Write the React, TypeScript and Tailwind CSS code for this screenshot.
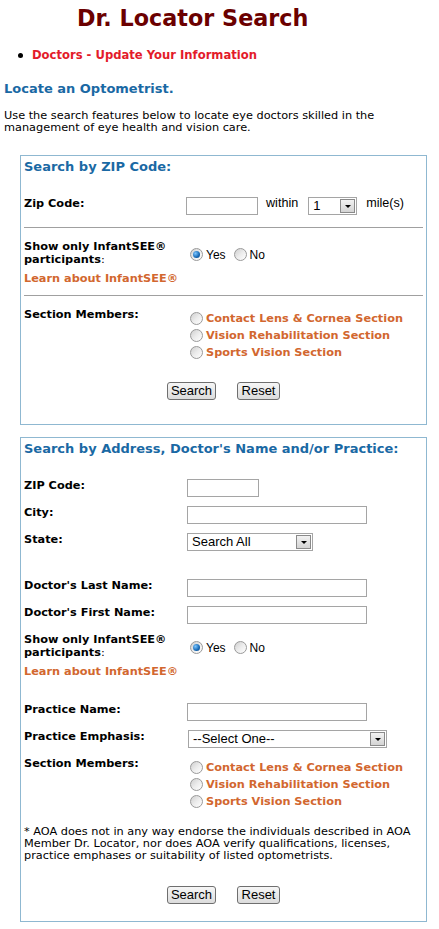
import React from 'react';

const Radio: React.FC<{ checked?: boolean }> = ({ checked }) => (
  <span className="flex h-[13px] w-[13px] shrink-0 items-center justify-center rounded-full border border-[#9a9a9a] bg-linear-to-br from-[#cfcfcf] via-[#ececec] to-white">
    {checked && (
      <span className="h-[7px] w-[7px] rounded-full bg-[radial-gradient(circle_at_35%_35%,#7cc6ff,#1668b4_60%,#0a3f75)]" />
    )}
  </span>
);

const TextBox: React.FC<{ w: string }> = ({ w }) => (
  <div className={`h-[18px] border border-[#a5a5a5] bg-white ${w}`} />
);

const Select: React.FC<{ w: string; value: string }> = ({ w, value }) => (
  <div className={`flex h-[18px] items-center justify-between border border-[#a5a5a5] bg-white pl-[4px] pr-px ${w}`}>
    <span className="font-['Liberation_Sans',Arial,sans-serif] text-[13px] leading-[16px] text-black">{value}</span>
    <span className="flex h-[14px] w-[15px] items-center justify-center border border-[#8a8a8a] bg-linear-to-b from-[#f2f2f2] to-[#d4d4d4]">
      <span className="h-0 w-0 border-x-[3px] border-t-[3px] border-x-transparent border-t-black" />
    </span>
  </div>
);

const Btn: React.FC<{ label: string; w: string }> = ({ label, w }) => (
  <button className={`flex h-[18px] items-center justify-center rounded-[3px] border border-[#6f6f6f] bg-linear-to-b from-[#f6f6f6] to-[#dcdcdc] font-['Liberation_Sans',Arial,sans-serif] text-[13px] leading-[16px] text-black ${w}`}>
    {label}
  </button>
);

const Label: React.FC<{ children: React.ReactNode }> = ({ children }) => (
  <div className="w-[162px] shrink-0 text-[11.3px] font-bold leading-[13px] text-black">{children}</div>
);

const Row: React.FC<{ label: React.ReactNode; mt: string; children: React.ReactNode }> = ({ label, mt, children }) => (
  <div className={`flex items-start ${mt}`}>
    <Label>{label}</Label>
    {children}
  </div>
);

const InfantRow: React.FC<{ mt: string }> = ({ mt }) => (
  <>
    <div className={`flex items-center ${mt}`}>
      <Label>
        Show only InfantSEE®
        <br />
        participants<span className="font-normal">:</span>
      </Label>
      <div className="ml-[4px] flex items-center pt-[3px] font-['Liberation_Sans',Arial,sans-serif] text-[12px] text-black">
        <Radio checked />
        <span className="ml-[3px]">Yes</span>
        <span className="ml-[8px]">
          <Radio />
        </span>
        <span className="ml-[3px]">No</span>
      </div>
    </div>
    <div className="mt-[6px] text-[11.3px] font-bold leading-[13px] text-[#d2672f]">Learn about InfantSEE®</div>
  </>
);

const Sections: React.FC<{ mt: string }> = ({ mt }) => (
  <div className={`flex items-start ${mt}`}>
    <Label>Section Members:</Label>
    <div className="ml-[4px] mt-[2px] flex flex-col">
      {['Contact Lens & Cornea Section', 'Vision Rehabilitation Section', 'Sports Vision Section'].map((s) => (
        <div key={s} className="flex h-[17px] items-center">
          <Radio />
          <span className="ml-[3px] text-[11.3px] font-bold leading-[13px] text-[#d2672f]">{s}</span>
        </div>
      ))}
    </div>
  </div>
);

const Buttons: React.FC<{ mt: string }> = ({ mt }) => (
  <div className={`flex justify-center gap-[21px] ${mt}`}>
    <Btn label="Search" w="w-[49px]" />
    <Btn label="Reset" w="w-[43px]" />
  </div>
);

export default function App() {
  return (
    <div className="min-h-[929px] w-[439px] bg-white px-[4px] font-['DejaVu_Sans',Verdana,sans-serif] text-black">
      <h1 className="pl-[73px] pt-[5px] text-[22.3px] font-bold leading-[26px] text-[#6b0000]">Dr. Locator Search</h1>

      <ul className="mt-[18px] flex items-center">
        <li className="flex items-center">
          <span className="ml-[14px] h-[5px] w-[5px] rounded-full bg-black" />
          <span className="ml-[9px] text-[11.6px] font-bold leading-[13px] text-[#e31b2a]">Doctors - Update Your Information</span>
        </li>
      </ul>

      <h2 className="mt-[19px] text-[13px] font-bold leading-[16px] text-[#1a69a4]">Locate an Optometrist.</h2>

      <p className="mt-[13px] pr-[30px] text-[11.3px] leading-[12px]">
        Use the search features below to locate eye doctors skilled in the management of eye health and vision care.
      </p>

      {/* Search by ZIP */}
      <div className="ml-[16px] mt-[21px] w-[407px] border border-[#8fb8d1] px-[3px] pb-[24px] pt-[3px]">
        <h3 className="text-[13px] font-bold leading-[16px] text-[#1a69a4]">Search by ZIP Code:</h3>

        <Row label="Zip Code:" mt="mt-[22px]">
          <TextBox w="w-[72px]" />
          <span className="ml-[8px] font-['Liberation_Sans',Arial,sans-serif] text-[12.6px] leading-[13px]">within</span>
          <div className="ml-[10px]">
            <Select w="w-[49px]" value="1" />
          </div>
          <span className="ml-[9px] font-['Liberation_Sans',Arial,sans-serif] text-[12.6px] leading-[13px]">mile(s)</span>
        </Row>

        <div className="mt-[12px] h-px bg-[#a0a0a0]" />

        <InfantRow mt="mt-[12px]" />

        <div className="mt-[10px] h-px bg-[#a0a0a0]" />

        <Sections mt="mt-[12px]" />

        <Buttons mt="mt-[21px]" />
      </div>

      {/* Search by address */}
      <div className="ml-[16px] mt-[12px] w-[407px] border border-[#8fb8d1] px-[3px] pb-[17px] pt-[3px]">
        <h3 className="text-[13px] font-bold leading-[16px] text-[#1a69a4]">Search by Address, Doctor's Name and/or Practice:</h3>

        <Row label="ZIP Code:" mt="mt-[22px]">
          <div className="ml-px"><TextBox w="w-[72px]" /></div>
        </Row>
        <Row label="City:" mt="mt-[9px]">
          <div className="ml-px"><TextBox w="w-[180px]" /></div>
        </Row>
        <Row label="State:" mt="mt-[9px]">
          <div className="ml-px"><Select w="w-[126px]" value="Search All" /></div>
        </Row>
        <Row label="Doctor's Last Name:" mt="mt-[28px]">
          <div className="ml-px"><TextBox w="w-[180px]" /></div>
        </Row>
        <Row label="Doctor's First Name:" mt="mt-[9px]">
          <div className="ml-px"><TextBox w="w-[180px]" /></div>
        </Row>

        <InfantRow mt="mt-[9px]" />

        <Row label="Practice Name:" mt="mt-[25px]">
          <div className="ml-px"><TextBox w="w-[180px]" /></div>
        </Row>
        <Row label="Practice Emphasis:" mt="mt-[9px]">
          <div className="ml-[2px]"><Select w="w-[199px]" value="--Select One--" /></div>
        </Row>

        <Sections mt="mt-[9px]" />

        <p className="mt-[16px] text-[11.3px] leading-[12px]">
          * AOA does not in any way endorse the individuals described in AOA Member Dr. Locator, nor does AOA verify qualifications, licenses, practice emphases or suitability of listed optometrists.
        </p>

        <Buttons mt="mt-[24px]" />
      </div>
    </div>
  );
}
